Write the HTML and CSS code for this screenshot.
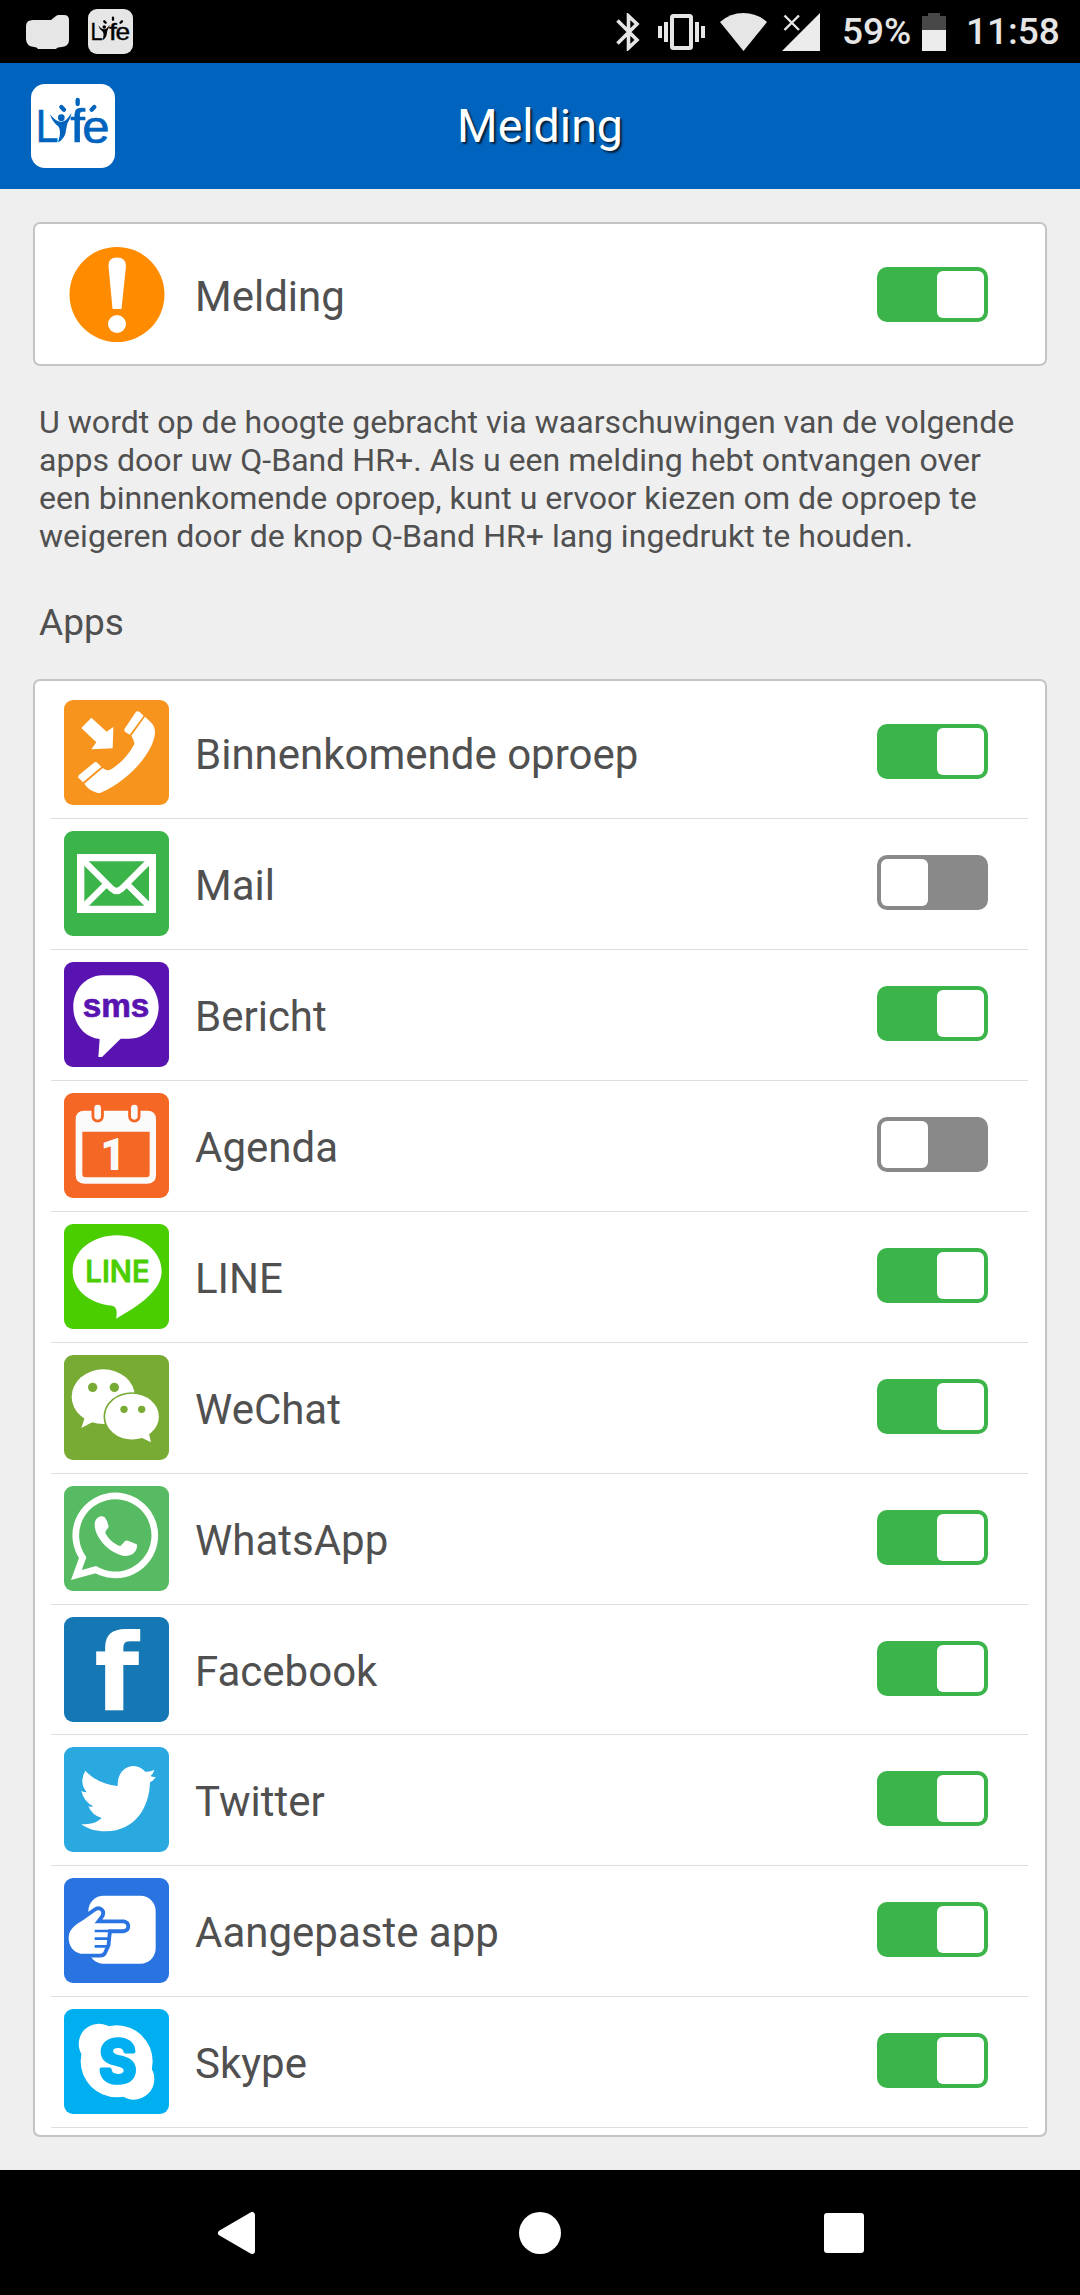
FILE: index.html
```html
<!DOCTYPE html>
<html lang="nl">
<head>
	<meta charset="UTF-8">
	<meta name="viewport" content="width=device-width">
	<title>Melding</title>
	<link rel="stylesheet" href="styles.css">
</head>
<body>

<div class="status">
	<svg class="folder" width="43" height="34" viewBox="0 0 43 34"><path d="M7 5H25L30 1Q31 0 33 0H38Q43 0 43 5V25Q43 31 36 32Q31 32 30 34H12Q11 32 8 32Q0 31 0 24V11Q0 5 7 5Z" fill="#e6e6e6"/></svg>
	<svg class="mini" width="45" height="45" viewBox="0 0 252 252">
		<g class="logo-text">
			<text x="14" y="175" textLength="68" lengthAdjust="spacingAndGlyphs">L</text>
			<text x="118" y="175" textLength="44" lengthAdjust="spacingAndGlyphs">f</text>
			<text x="154" y="176" textLength="82" lengthAdjust="spacingAndGlyphs">e</text>
		</g>
		<path class="rays" d="M140 48v12M91 69l8 8M190 69l-8 8"/>
		<circle cx="91" cy="101" r="10"/>
		<path d="M57 91Q70 107 82 112Q95 115 105 108Q113 100 121 88Q122 94 112 113C104 125 108 145 98 160Q90 172 81 175Q92 142 83 128Q64 115 57 91Z"/>
	</svg>
	<svg class="bt" width="24" height="38" viewBox="0 0 24 38"><path d="M1.500 7.500L21 27L12.500 35V3L21 11L1.500 30.500" fill="none" stroke="#e6e6e6" stroke-width="3.600"/></svg>
	<svg class="vib" width="47" height="36" viewBox="0 0 47 36"><rect x="14" y="2" width="19" height="32" rx="1.500" fill="none" stroke="#e6e6e6" stroke-width="4"/><path d="M0 12h4v12h-4zM6 8h4v20h-4zM37 8h4v20h-4zM43 12h4v12h-4z" fill="#e6e6e6"/></svg>
	<svg class="wifi" width="47" height="38" viewBox="0 0 47 38"><path d="M0 9Q10 0 23.500 0T47 9L23.500 38Z" fill="#e6e6e6"/></svg>
	<svg class="signal" width="38" height="38" viewBox="0 0 38 38"><path d="M38 0V38H0Z" fill="#ececec"/><path d="M2.500 2.500L17 17M17 2.500L2.500 17" stroke="#e6e6e6" stroke-width="2.400"/></svg>
	<span class="percent">59%</span>
	<svg class="battery" width="24" height="38" viewBox="0 0 24 38"><path d="M0 3H6V0H18V3H24V18H0Z" fill="#484848"/><path d="M0 17H24V38H0Z" fill="#ececec"/></svg>
	<span class="time">11:58</span>
</div>

<div class="header">
	<svg class="logo" width="84" height="84" viewBox="0 0 252 252">
		<g class="logo-text">
			<text x="14" y="175" textLength="68" lengthAdjust="spacingAndGlyphs">L</text>
			<text x="118" y="175" textLength="44" lengthAdjust="spacingAndGlyphs">f</text>
			<text x="154" y="176" textLength="82" lengthAdjust="spacingAndGlyphs">e</text>
		</g>
		<path class="rays" d="M140 48v12M91 69l8 8M190 69l-8 8"/>
		<circle cx="91" cy="101" r="10"/>
		<path d="M57 91Q70 107 82 112Q95 115 105 108Q113 100 121 88Q122 94 112 113C104 125 108 145 98 160Q90 172 81 175Q92 142 83 128Q64 115 57 91Z"/>
	</svg>
	<h1>Melding</h1>
</div>

<div class="content">
	<div class="card main">
		<svg class="alert" width="96" height="96" viewBox="0 0 96 96"><circle cx="48" cy="48.500" r="47.500" fill="#ff8c00"/><path d="M39.500 20Q39 11.500 48 11.500T57 20L52.500 63H43.500Z" fill="#fff"/><circle cx="48" cy="78" r="9" fill="#fff"/></svg>
		<span class="label">Melding</span>
		<div class="switch on"><i></i></div>
	</div>

	<p class="info">U wordt op de hoogte gebracht via waarschuwingen van de volgende<br>apps door uw Q-Band HR+. Als u een melding hebt ontvangen over<br>een binnenkomende oproep, kunt u ervoor kiezen om de oproep te<br>weigeren door de knop Q-Band HR+ lang ingedrukt te houden.</p>

	<h2>Apps</h2>

	<ul class="card">
		<li>
			<svg class="icon call" viewBox="0 0 315 315">
				<path d="M82 53L52 84L97 127L82 148L146 145L148 81L128 95Z"/>
				<path d="M214 38Q219 31 227 36L239 47L197 104L183 95Q179 90 182 86Z"/>
				<path d="M243 50L262 68Q273 80 273 97C272 150 200 240 110 278Q102 281 93 276C80 271 70 264 61 251L116 204Q123 212 137 210C165 195 195 165 211 132Q212 125 202 107Z"/>
				<path d="M98 187L112 200L57 247L44 234Q41 229 45 225L89 189Q94 185 98 187Z"/>
			</svg>
			<span class="label">Binnenkomende oproep</span>
			<div class="switch on"><i></i></div>
		</li>
		<li>
			<svg class="icon mail" viewBox="0 0 315 315">
				<path d="M39 69H276V246H39ZM61 91V224H255V91Z"/>
				<path d="M60 90L143 173Q158 187 173 173L256 90M60 226L122 164M256 226L194 164" fill="none" stroke="#fff" stroke-width="19"/>
			</svg>
			<span class="label">Mail</span>
			<div class="switch"><i></i></div>
		</li>
		<li>
			<svg class="icon sms" viewBox="0 0 315 315">
				<path d="M115 40H200C250 41 284 88 284 135C284 185 250 230 195 230H170L114 285H103L107 231C60 226 28 185 28 135C28 85 62 42 115 40Z"/>
				<text x="56" y="164" textLength="200" lengthAdjust="spacingAndGlyphs">sms</text>
			</svg>
			<span class="label">Bericht</span>
			<div class="switch on"><i></i></div>
		</li>
		<li>
			<svg class="icon agenda" viewBox="0 0 315 315">
				<path d="M61 53H250Q276 53 276 79V246Q276 272 250 272H61Q35 272 35 246V79Q35 53 61 53ZM55 116V244Q55 253 64 253H248Q257 253 257 244V116Z"/>
				<path d="M101 45V70M211 45V70" stroke="#f56725" stroke-width="37" stroke-linecap="round"/>
				<path d="M101 45V70M211 45V70" stroke="#fafafa" stroke-width="20" stroke-linecap="round"/>
				<text x="109" y="231">1</text>
			</svg>
			<span class="label">Agenda</span>
			<div class="switch"><i></i></div>
		</li>
		<li>
			<svg class="icon line" viewBox="0 0 315 315">
				<path d="M159 34C232 34 293 80 293 142C293 200 225 245 157 284L158 265Q158 248 144 245C80 240 26 200 26 142C26 80 86 34 159 34Z"/>
				<text x="64" y="174" textLength="193" lengthAdjust="spacingAndGlyphs">LINE</text>
			</svg>
			<span class="label">LINE</span>
			<div class="switch on"><i></i></div>
		</li>
		<li>
			<svg class="icon wechat" viewBox="0 0 315 315">
				<ellipse cx="118" cy="125" rx="95" ry="82"/>
				<path d="M62 188L52 219L86 201Z"/>
				<g fill="#78ab33"><circle cx="86" cy="97" r="14"/><circle cx="151" cy="97" r="14"/></g>
				<ellipse cx="204" cy="185" rx="83" ry="71" stroke="#78ab33" stroke-width="5"/>
				<path d="M254 232L261 262L228 246Z"/>
				<g fill="#78ab33"><circle cx="180" cy="163" r="11"/><circle cx="233" cy="163" r="11"/></g>
			</svg>
			<span class="label">WeChat</span>
			<div class="switch on"><i></i></div>
		</li>
		<li>
			<svg class="icon whatsapp" viewBox="0 0 315 315">
				<path d="M56 215A118.500 118.500 0 1 1 95 251L37 267Z" fill="none" stroke="#fff" stroke-width="20"/>
				<path d="M103 94Q112 88 122 94Q130 103 134 121Q134 127 125 135Q123 140 126 145C135 160 150 175 168 180Q172 178 183 165Q187 162 192 164L218 175Q221 180 217 190C210 208 190 212 176 209C135 198 105 165 95 135C90 118 90 103 103 94Z"/>
			</svg>
			<span class="label">WhatsApp</span>
			<div class="switch on"><i></i></div>
		</li>
		<li class="short">
			<svg class="icon facebook" viewBox="0 0 315 315">
				<text x="91" y="279" textLength="135" lengthAdjust="spacingAndGlyphs">f</text>
			</svg>
			<span class="label">Facebook</span>
			<div class="switch on"><i></i></div>
		</li>
		<li>
			<svg class="icon twitter" viewBox="0 0 315 315">
				<path d="M64 71C90 98 120 113 161 117C160 80 180 58 210 57Q228 58 244 74Q260 75 271 68Q268 80 260 87Q268 91 276 89Q268 102 258 106C256 180 215 253 125 253C95 253 68 245 52 231Q90 235 113 213Q85 206 73 178Q80 180 88 178Q60 165 52 132Q60 136 68 136Q44 105 64 71Z"/>
			</svg>
			<span class="label">Twitter</span>
			<div class="switch on"><i></i></div>
		</li>
		<li>
			<svg class="icon custom" viewBox="0 0 315 315">
				<rect x="73" y="53" width="202" height="204" rx="46"/>
				<path d="M106 97Q114 101 111 110L92 136H178Q187 138 187 145Q187 153 178 154H133L130 178L128 200L118 222Q116 227 108 227H50C25 222 14 200 14 180C14 150 40 138 58 126L95 100Q101 95 106 97Z" stroke="#2a74e1" stroke-width="23" stroke-linejoin="round" paint-order="stroke"/>
				<path d="M92 159H136M92 182H132M92 205H130" stroke="#2a74e1" stroke-width="8"/>
			</svg>
			<span class="label">Aangepaste app</span>
			<div class="switch on"><i></i></div>
		</li>
		<li>
			<svg class="icon skype" viewBox="0 0 315 315">
				<circle cx="158" cy="157" r="108"/>
				<circle cx="105" cy="105" r="61"/>
				<circle cx="209" cy="210" r="62"/>
				<text x="161" y="220" text-anchor="middle">S</text>
			</svg>
			<span class="label">Skype</span>
			<div class="switch on"><i></i></div>
		</li>
	</ul>
</div>

<div class="nav">
	<svg width="42" height="44" viewBox="0 0 42 44"><path d="M6 22L37 4V40Z" fill="#fff" stroke="#fff" stroke-width="6" stroke-linejoin="round"/></svg>
	<svg width="42" height="44" viewBox="0 0 42 44"><circle cx="21" cy="22" r="21" fill="#fff"/></svg>
	<svg width="42" height="44" viewBox="0 0 42 44"><rect x="1" y="2" width="40" height="40" rx="3" fill="#fff"/></svg>
</div>

</body>
</html>
```
FILE: styles.css
```css
*{padding:0; margin:0; box-sizing:border-box;}
body{width:1080px; height:2295px; background:#efefef; color:#505050; font-family:Roboto,sans-serif; overflow:hidden; display:flex; flex-direction:column;}
svg{display:block; flex:none;}

.status{height:63px; flex:none; background:#000; color:#e6e6e6; display:flex; align-items:center; padding-left:26px; font-size:37px; font-weight:500; line-height:65px; white-space:nowrap;}
.mini{margin-left:19px; border-radius:9px; background:#e6e6e6; color:#000; fill:#000;}
.bt{margin-left:483px;}
.vib{margin-left:18px;}
.wifi{margin-left:15px;}
.signal{margin-left:15px;}
.percent{width:78px; margin-left:22px;}
.battery{margin-left:2px;}
.time{margin-left:20px;}

.logo-text{font-family:"Liberation Sans",Arial,sans-serif; font-size:136px; font-weight:400; stroke:currentColor; stroke-width:2;}
.rays{stroke:currentColor; stroke-width:13; stroke-linecap:round;}

.header{height:126px; flex:none; background:#0064be; display:grid; grid-template-columns:84px 1fr 84px; align-items:center; padding:0 31px;}
.logo{border-radius:14px; background:#fff; color:#0064be; fill:#0064be;}
h1{color:#fff; font-size:46.500px; font-weight:400; text-align:center; text-shadow:2px 2px 2px rgba(0,0,0,.7);}

.content{flex:1; padding:33px 33px 0;}
.card{background:#fff; border:2px solid #c4c4c4; border-radius:7px;}
.main{height:144px; display:flex; align-items:center; padding:0 57px 0 34px;}
.main .label{margin-left:30px;}
.label{flex:1; font-size:42px; line-height:50px; padding-top:5px;}
.info{margin:37px 0 0 6px; font-size:32.100px; line-height:38px; white-space:nowrap;}
h2{margin:46px 0 0 6px; font-size:37px; line-height:44px; font-weight:400;}

ul{height:1458px; margin-top:34px; padding:7px 17px 0 16px; list-style:none;}
li{height:131px; display:flex; align-items:flex-start; padding:0 40px 0 13px; border-bottom:1px solid #dedede;}
li.short{height:130px;}
li .label{margin:37px 0 0 26px;}
li .switch{margin-top:36px;}

.icon{width:105px; height:105px; margin-top:12px; border-radius:9px; fill:#fff; overflow:visible;}
.call{background:#f7941e;}
.mail{background:#3bb54a;}
.sms{background:#5813b0;}
.sms text{font-family:"Liberation Sans",Arial,sans-serif; font-size:98px; font-weight:700; fill:#5813b0; stroke:#5813b0; stroke-width:2;}
.agenda{background:#f56725; fill:#fafafa;}
.agenda text{font-size:132px; font-weight:900;}
.line{background:#4bce00;}
.line text{font-family:Inter,sans-serif; font-size:90px; font-weight:500; fill:#4bce00; stroke:#4bce00; stroke-width:3; stroke-linejoin:round;}
.wechat{background:#78ab33;}
.whatsapp{background:#57bb63;}
.facebook{background:#1578b4;}
.facebook text{font-family:"DejaVu Sans",sans-serif; font-size:320px; font-weight:700;}
.twitter{background:#2aa9e0;}
.custom{background:#2a74e1;}
.skype{background:#00aff0;}
.skype text{font-family:Inter,sans-serif; font-size:172px; font-weight:700; fill:#00aff0; stroke:#00aff0; stroke-width:11; stroke-linejoin:round;}

.switch{width:111px; height:55px; flex:none; padding:4px; border-radius:10px; background:#898989; display:flex;}
.switch i{width:47px; height:47px; border-radius:6px; background:#fff;}
.switch.on{background:#3bb54a; justify-content:flex-end;}

.nav{height:125px; flex:none; background:#000; display:flex; justify-content:space-between; align-items:center; padding:1px 215px 0;}
```
